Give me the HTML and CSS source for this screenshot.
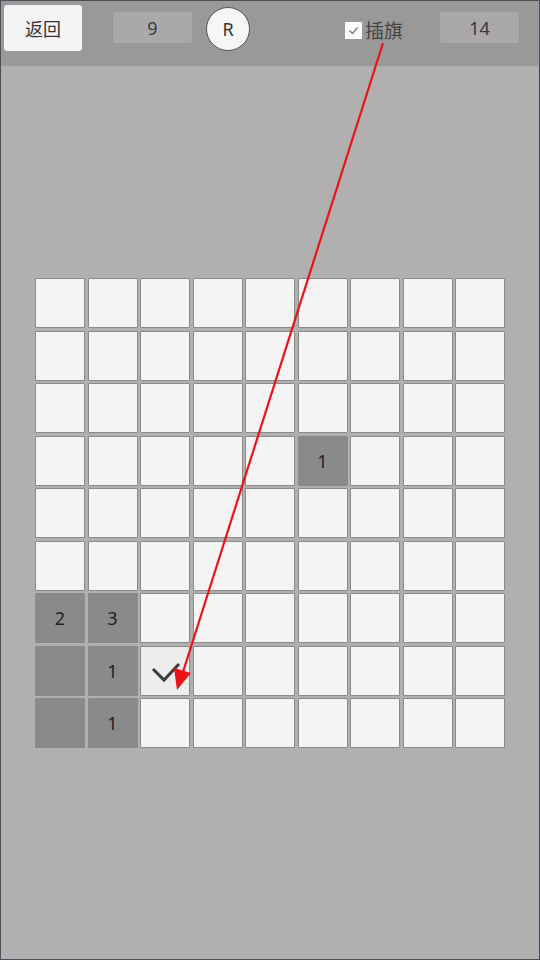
FILE: index.html
```html
<!DOCTYPE html>
<html>
<head>
<meta charset="utf-8">
<link rel="stylesheet" href="styles.css">
</head>
<body>
<div class="frame">
  <div class="topbar">
    <button class="back">返回</button>
    <div class="counter c-mines">9</div>
    <div class="reset">R</div>
    <label class="flag">
      <span class="box"><svg width="13" height="13" viewBox="0 0 13 13"><path d="M2.5 6.5 L5.5 9.5 L10.5 3.5" fill="none" stroke="#777" stroke-width="1.2"/></svg></span>
      <span class="flag-text">插旗</span>
    </label>
    <div class="counter c-time">14</div>
  </div>
  <div class="main">
    <div class="grid" id="grid"></div>
  </div>
  <svg class="arrow" width="540" height="960" viewBox="0 0 540 960">
    <line x1="383" y1="43" x2="183" y2="672" stroke="#e8141b" stroke-width="2.2"/>
    <polygon points="177,690 174,668 191,673" fill="#e8141b"/>
  </svg>
</div>
<script src="app.js"></script>
</body>
</html>
```
FILE: app.js
```js
var revealed = {"3,5":"1","6,0":"2","6,1":"3","7,0":"","7,1":"1","8,0":"","8,1":"1"};
var g = document.getElementById('grid');
for (var r = 0; r < 9; r++) {
  for (var c = 0; c < 9; c++) {
    var d = document.createElement('div');
    var k = r + ',' + c;
    if (k in revealed) {
      d.className = 'cell open';
      d.textContent = revealed[k];
    } else if (r === 7 && c === 2) {
      d.className = 'cell marked';
      d.innerHTML = '<svg class="check" width="48" height="48" viewBox="0 0 48 48"><path d="M12 22 L23 33 L38 17" fill="none" stroke="#3c3c3c" stroke-width="3"/></svg>';
    } else {
      d.className = 'cell';
    }
    g.appendChild(d);
  }
}
```
FILE: styles.css
```css
html, body { margin: 0; padding: 0; }
body { width: 540px; height: 960px; overflow: hidden; font-family: "Noto Sans", "Noto Sans CJK SC", sans-serif; }
.frame {
  position: relative;
  width: 540px; height: 960px;
  box-sizing: border-box;
  border: 1px solid #4b4f5a;
  background: #b1afaf;
  display: flex; flex-direction: column;
}
.topbar {
  height: 65px;
  background: #9a9898;
  display: flex;
  align-items: flex-start;
  padding-left: 3px;
  box-sizing: border-box;
}
.back {
  width: 78px; height: 46px;
  margin-top: 4px;
  border: none; border-radius: 3px;
  background: #f4f4f4;
  font-family: "Noto Sans CJK SC", sans-serif;
  font-size: 18px; color: #333;
  padding: 0;
}
.counter {
  width: 79px; height: 31px;
  margin-top: 11px;
  background: #aaa8a8;
  border-radius: 2px;
  display: flex; align-items: center; justify-content: center;
  font-size: 18px; color: #3a3a3a;
}
.c-mines { margin-left: 31px; }
.reset {
  width: 42px; height: 42px;
  margin-left: 14px; margin-top: 6px;
  border: 1px solid #555;
  border-radius: 50%;
  background: #f6f6f6;
  display: flex; align-items: center; justify-content: center;
  font-size: 18px; color: #333;
}
.flag {
  margin-left: 95px; margin-top: 15px;
  display: flex; align-items: center;
}
.box {
  width: 17px; height: 17px;
  background: #fbfbfb;
  display: flex; align-items: center; justify-content: center;
}
.flag-text {
  margin-left: 3px;
  font-family: "Noto Sans CJK SC", sans-serif;
  font-size: 19px; line-height: 28px; color: #444;
}
.c-time { margin-left: 37px; }
.main {
  flex: 1;
  padding: 212px 0 0 34px;
}
.grid {
  display: grid;
  grid-template-columns: repeat(9, 50px);
  grid-auto-rows: 50px;
  gap: 2.5px;
}
.cell {
  box-sizing: border-box;
  background: #f4f4f4;
  border: 1px solid #8a8a8a;
  border-radius: 1px;
  display: flex; align-items: center; justify-content: center;
  font-size: 18px; color: #222;
}
.cell.open { background: #8a8a8a; border-color: #8a8a8a; }
.cell.marked { background: #ededed; }
.arrow { position: absolute; left: -1px; top: -1px; pointer-events: none; }
```
